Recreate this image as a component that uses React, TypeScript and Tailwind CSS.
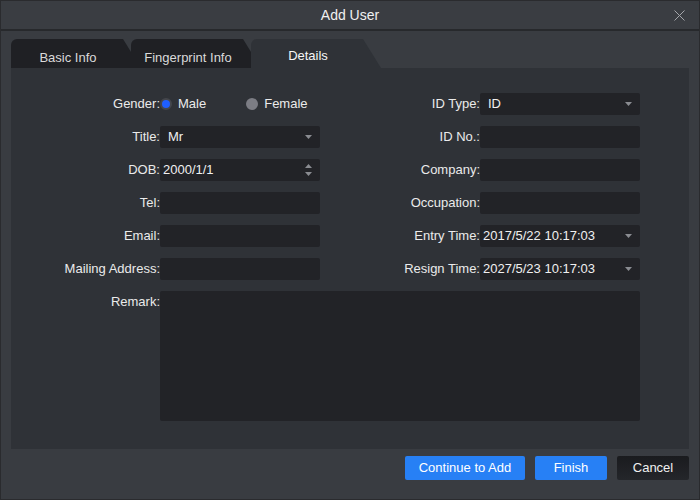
import React, { useState } from 'react';

type Field = {
  label: string;
  value?: string;
  kind?: 'text' | 'select' | 'spin';
  tall?: boolean;
};

const leftFields: Field[] = [
  { label: 'Title:', value: 'Mr', kind: 'select' },
  { label: 'DOB:', value: '2000/1/1', kind: 'spin', tall: true },
  { label: 'Tel:' },
  { label: 'Email:' },
  { label: 'Mailing Address:' },
];

const rightFields: Field[] = [
  { label: 'ID No.:' },
  { label: 'Company:' },
  { label: 'Occupation:' },
  { label: 'Entry Time:', value: '2017/5/22 10:17:03', kind: 'select', tall: true },
  { label: 'Resign Time:', value: '2027/5/23 10:17:03', kind: 'select', tall: true },
];

const tabs = ['Basic Info', 'Fingerprint Info', 'Details'];

const Caret = () => (
  <svg width="7" height="4" viewBox="0 0 7 4" className="shrink-0">
    <path d="M0 0h7L3.5 4z" fill="#8a8c91" />
  </svg>
);

const Input: React.FC<{ field: Field; padLeft?: boolean }> = ({ field, padLeft }) => (
  <div
    className={`flex items-center justify-between bg-[#222327] rounded-[2px] pr-[8px] text-[#f0f0f0] ${
      field.tall ? 'h-[24px]' : 'h-[22px]'
    } ${padLeft ? 'pl-[8px]' : 'pl-[3px]'}`}
  >
    <span>{field.value}</span>
    {field.kind === 'select' && <Caret />}
    {field.kind === 'spin' && (
      <div className="flex flex-col gap-[4px]">
        <svg width="7" height="4" viewBox="0 0 7 4">
          <path d="M0 4h7L3.5 0z" fill="#8a8c91" />
        </svg>
        <Caret />
      </div>
    )}
  </div>
);

const Label: React.FC<{ text: string }> = ({ text }) => (
  <div className="h-[22px] flex items-center justify-end text-[#ebebeb] whitespace-nowrap">{text}</div>
);

const Radio: React.FC<{ on: boolean }> = ({ on }) =>
  on ? (
    <span className="w-[12px] h-[12px] rounded-full bg-[#1f5fff] border-[2.5px] border-[#44464c] shrink-0" />
  ) : (
    <span className="w-[12px] h-[12px] rounded-full bg-[#7c7d84] shrink-0" />
  );

export default function App() {
  const [gender, setGender] = useState<'male' | 'female'>('male');

  return (
    <div
      className="w-[700px] h-[500px] bg-[#393c41] border border-[#2a2b2e] flex flex-col text-[13px] overflow-hidden"
      style={{ fontFamily: '"Liberation Sans", Arial, sans-serif' }}
    >
      {/* Title bar */}
      <div className="h-[30px] shrink-0 relative flex items-center justify-center bg-[#3a3d42] border-b-2 border-[#27292c] text-[14px] text-[#f0f0f0]">
        Add User
        <svg width="11" height="11" viewBox="0 0 11 11" className="absolute right-[14px] top-[9px]">
          <path d="M0.5 0.5l10 10M10.5 0.5l-10 10" stroke="#a4a6aa" strokeWidth="1" />
        </svg>
      </div>

      {/* Tabs */}
      <div className="flex mt-[8px] px-[10px] h-[29px] shrink-0">
        {tabs.map((t, i) => {
          const active = i === tabs.length - 1;
          return (
            <div
              key={t}
              className={`relative w-[130px] h-[29px] rounded-tl-[6px] rounded-tr-[6px] [clip-path:polygon(0_0,calc(100%-18px)_0,100%_100%,0_100%)] pr-[16px] flex justify-center leading-[16px] ${
                i > 0 ? '-ml-[10px]' : ''
              } ${active ? 'bg-[#2f3237] text-[#f6f6f6] pt-[9px]' : 'bg-[#1f2024] text-[#dadada] pt-[11px]'}`}
            >
              {t}
            </div>
          );
        })}
      </div>

      {/* Content panel */}
      <div className="mx-[10px] h-[381px] shrink-0 bg-[#2f3237] pt-[25px]">
        <div className="grid grid-cols-[149px_160px_160px_160px] gap-y-[11px]">
          {/* Row 1 */}
          <Label text="Gender:" />
          <div className="h-[22px] flex items-center text-[#ebebeb]">
            <button className="flex items-center" onClick={() => setGender('male')}>
              <Radio on={gender === 'male'} />
              <span className="ml-[6px]">Male</span>
            </button>
            <button className="flex items-center ml-[40px]" onClick={() => setGender('female')}>
              <Radio on={gender === 'female'} />
              <span className="ml-[6px]">Female</span>
            </button>
          </div>
          <Label text="ID Type:" />
          <Input field={{ label: 'ID Type:', value: 'ID', kind: 'select' }} padLeft />

          {leftFields.map((f, i) => (
            <React.Fragment key={f.label}>
              <Label text={f.label} />
              <div className="h-[22px] flex flex-col justify-center">
                <Input field={f} padLeft={f.label === 'Title:'} />
              </div>
              <Label text={rightFields[i].label} />
              <div className="h-[22px] flex flex-col justify-center">
                <Input field={rightFields[i]} />
              </div>
            </React.Fragment>
          ))}

          <div className="h-[22px] flex items-center justify-end text-[#ebebeb] self-start">Remark:</div>
          <div className="col-span-3 h-[130px] bg-[#222327] rounded-[2px]" />
        </div>
      </div>

      {/* Footer */}
      <div className="flex justify-end gap-[10px] px-[10px] mt-[7px]">
        <button className="w-[120px] h-[24px] rounded-[2px] bg-[#2780f5] text-white">Continue to Add</button>
        <button className="w-[72px] h-[24px] rounded-[2px] bg-[#2780f5] text-white">Finish</button>
        <button className="w-[72px] h-[24px] rounded-[2px] bg-gradient-to-b from-[#1a1b1e] to-[#24262a] text-[#f0f0f0]">
          Cancel
        </button>
      </div>
    </div>
  );
}
